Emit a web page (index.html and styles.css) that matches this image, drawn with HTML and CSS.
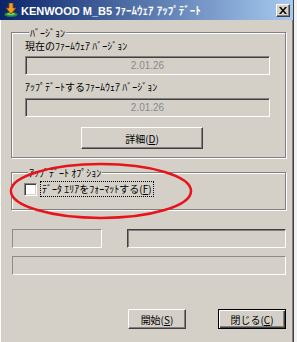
FILE: index.html
```html
<!DOCTYPE html>
<html><head><meta charset="utf-8">
<title>KENWOOD M_B5 ﾌｧｰﾑｳｪｱ ｱｯﾌﾟﾃﾞｰﾄ</title>
<link rel="stylesheet" href="styles.css">
</head>
<body>

<div class="window">

<div class="titlebar">
<svg class="appicon" width="14" height="14" viewBox="0 0 14 14">
<ellipse cx="7" cy="11.5" rx="6.5" ry="2.3" fill="#2e8b3a"/>
<ellipse cx="7" cy="11" rx="4" ry="1.2" fill="#6fcf5a"/>
<path d="M5 0h4v5h3l-5 6-5-6h3z" fill="#f0a020" stroke="#8a4a00" stroke-width="0.8"/>
</svg>
<span class="title">KENWOOD M_B5 ﾌｧｰﾑｳｪｱ ｱｯﾌﾟﾃﾞｰﾄ</span>
<span class="closebtn"><svg width="8" height="7" viewBox="0 0 8 7"><path d="M0 0h2l2 2.5 2-2.5h2l-3 3.5 3 3.5h-2l-2-2.5-2 2.5h-2l3-3.5z" fill="#000"/></svg></span>
</div>

<div class="client">

<fieldset class="group">
<legend>ﾊﾞｰｼﾞｮﾝ</legend>
<div class="label label-first">現在のﾌｧｰﾑｳｪｱ ﾊﾞｰｼﾞｮﾝ</div>
<div class="field field-first">2.01.26</div>
<div class="label">ｱｯﾌﾟﾃﾞｰﾄするﾌｧｰﾑｳｪｱ ﾊﾞｰｼﾞｮﾝ</div>
<div class="field">2.01.26</div>
<button class="btn btn-detail">詳細(<u>D</u>)</button>
</fieldset>

<fieldset class="group group-option">
<legend>ｱｯﾌﾟﾃﾞｰﾄ ｵﾌﾟｼｮﾝ</legend>
<label class="check"><span class="checkbox"></span><span class="checktext">ﾃﾞｰﾀ ｴﾘｱをﾌｫｰﾏｯﾄする(<u>F</u>)</span></label>
</fieldset>

<div class="statusrow">
<div class="status status-left"></div>
<div class="status status-right"></div>
</div>
<div class="status status-long"></div>

<div class="actions">
<button class="btn btn-start">開始(<u>S</u>)</button>
<button class="btn btn-close">閉じる(<u>C</u>)</button>
</div>

</div>

<svg class="mark" width="186" height="60" viewBox="0 0 186 60">
<ellipse cx="93" cy="30" rx="90" ry="27" fill="none" stroke="#e8141c" stroke-width="2.6"/>
</svg>

</div>

</body></html>
```

FILE: styles.css
```css
* {padding:0;margin:0;box-sizing:border-box;}
body {background:#f2f2f2;font-family:"Noto Sans CJK JP","Liberation Sans",sans-serif;font-size:10px;color:#000;}

.window {position:relative;width:294px;height:342px;background:#d4d0c8;border-right:1px solid #404040;box-shadow:inset 1px 0 #fff, inset -1px 0 #808080;}

.titlebar {display:flex;align-items:center;height:20px;padding:0 3px 0 4px;background:linear-gradient(to right,#0a246a,#a6caf0);}
.appicon {flex:none;margin-right:3px;}
.title {flex:1;color:#fff;font-weight:bold;font-size:11px;font-family:"Liberation Sans","Noto Sans CJK JP",sans-serif;white-space:nowrap;}
.closebtn {display:flex;align-items:center;justify-content:center;width:14px;height:13px;background:#d4d0c8;border:1px solid;border-color:#fff #404040 #404040 #fff;box-shadow:inset -1px -1px #808080;}

.client {display:flex;flex-direction:column;padding:7px 7px 0 11px;}

.group {border:1px solid #808080;box-shadow:inset 1px 1px #fff,1px 1px #fff;padding:0 15px 8px 13px;}
.group legend {margin-left:4px;padding:0 1px;line-height:11px;background:#d4d0c8;}
.group-option {margin-top:9px;padding:3px 12px 12px 12px;}

.label {line-height:12px;margin-top:6px;}
.label-first {margin-top:2px;}
.field {margin-top:5px;height:19px;line-height:17px;text-align:center;color:#8a8a8a;font-family:"Liberation Sans",sans-serif;border:1px solid;border-color:#808080 #fff #fff #808080;box-shadow:inset 1px 1px #404040;}
.field-first {margin-top:4px;}

.btn {font-family:inherit;font-size:10px;height:21px;background:#d4d0c8;border:1px solid;border-color:#fff #404040 #404040 #fff;box-shadow:inset -1px -1px #808080;}
.btn-detail {width:122px;margin:10px 0 0 56px;height:22px;}

.check {display:flex;align-items:center;height:16px;}
.checkbox {width:13px;height:13px;background:#fff;border:1px solid;border-color:#808080 #fff #fff #808080;box-shadow:inset 1px 1px #404040,inset -1px -1px #d4d0c8;}
.checktext {margin-left:3px;padding:0 1px;line-height:14px;border:1px dotted #000;}

.statusrow {display:flex;justify-content:space-between;margin:19px 0 0 1px;}
.status {height:19px;border:1px solid;border-color:#8c8c8c #fff #fff #8c8c8c;}
.status-left {width:90px;}
.status-right {width:159px;border-color:#404040 #fff #fff #404040;box-shadow:inset 1px 1px #808080;}
.status-long {margin:8px 0 0 1px;}

.actions {display:flex;justify-content:flex-end;gap:32px;margin-top:34px;}
.btn-start {width:58px;height:20px;}
.btn-close {width:68px;height:20px;border:1px solid #000;box-shadow:inset 1px 1px #fff,inset -1px -1px #404040,inset -2px -2px #808080;}

.mark {position:absolute;left:8px;top:161px;}
```
